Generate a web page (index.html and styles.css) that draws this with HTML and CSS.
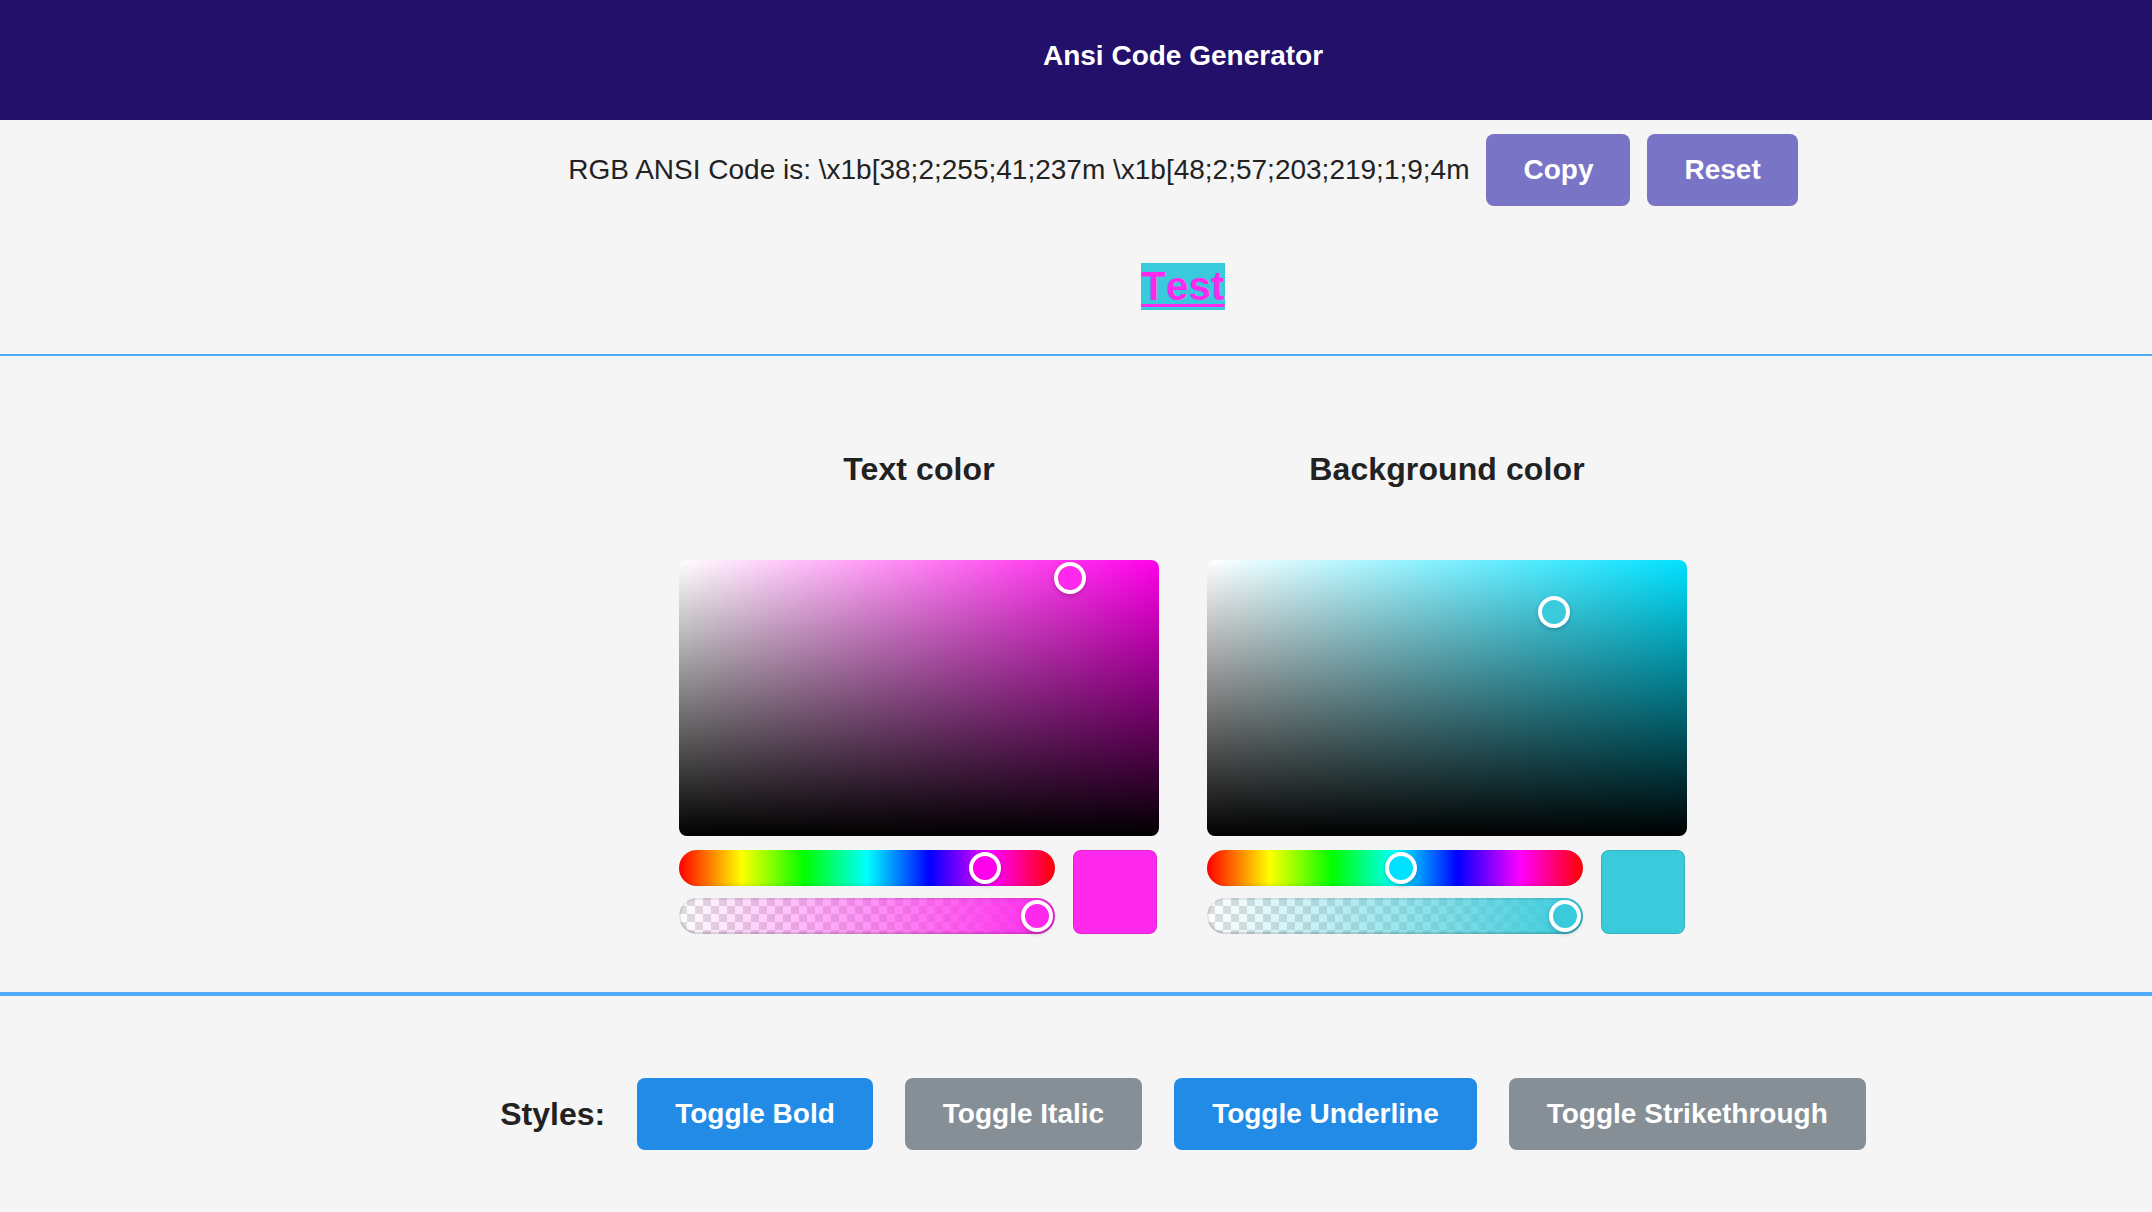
FILE: index.html
```html
<!DOCTYPE html>
<html lang="en">
<head>
<meta charset="utf-8">
<title>Ansi Code Generator</title>
<link rel="stylesheet" href="styles.css">
</head>
<body>
<header class="topbar">
  <h1 class="title">Ansi Code Generator</h1>
</header>

<section class="output">
  <div class="code-row">
    <span class="code-text">RGB ANSI Code is: \x1b[38;2;255;41;237m \x1b[48;2;57;203;219;1;9;4m</span>
    <button class="btn btn-violet">Copy</button>
    <button class="btn btn-violet">Reset</button>
  </div>
  <div class="preview-row">
    <span class="preview">Test</span>
  </div>
</section>

<hr class="rule-thin">

<section class="pickers">
  <div class="picker">
    <h2 class="picker-title">Text color</h2>
    <div class="sat sat-text">
      <span class="pointer pointer-big ptr-text-sat"></span>
    </div>
    <div class="controls">
      <div class="sliders">
        <div class="hue">
          <span class="pointer ptr-text-hue"></span>
        </div>
        <div class="alpha alpha-text">
          <span class="pointer ptr-text-alpha"></span>
        </div>
      </div>
      <div class="swatch swatch-text"></div>
    </div>
  </div>
  <div class="picker">
    <h2 class="picker-title">Background color</h2>
    <div class="sat sat-bg">
      <span class="pointer pointer-big ptr-bg-sat"></span>
    </div>
    <div class="controls">
      <div class="sliders">
        <div class="hue">
          <span class="pointer ptr-bg-hue"></span>
        </div>
        <div class="alpha alpha-bg">
          <span class="pointer ptr-bg-alpha"></span>
        </div>
      </div>
      <div class="swatch swatch-bg"></div>
    </div>
  </div>
</section>

<hr class="rule-thick">

<section class="styles-row">
  <span class="styles-label">Styles:</span>
  <button class="btn btn-blue">Toggle Bold</button>
  <button class="btn btn-gray">Toggle Italic</button>
  <button class="btn btn-blue">Toggle Underline</button>
  <button class="btn btn-gray">Toggle Strikethrough</button>
</section>
</body>
</html>
```

FILE: styles.css
```css
* { box-sizing: border-box; }

html, body {
  margin: 0;
  padding: 0;
  background: #f5f5f5;
  font-family: "Liberation Sans", Arial, sans-serif;
  color: #222;
}

.topbar {
  height: 120px;
  background: #23106a;
  display: flex;
  align-items: center;
  justify-content: center;
  padding-left: 214px;
  padding-bottom: 8px;
}

.title {
  margin: 0;
  font-size: 28px;
  font-weight: 700;
  color: #fff;
}

.output {
  padding-left: 214px;
  padding-top: 14px;
}

.code-row {
  display: flex;
  align-items: center;
  justify-content: center;
  gap: 17px;
}

.code-text {
  font-size: 28px;
  color: #222;
}

.btn {
  height: 72px;
  padding: 0 38px;
  border: none;
  border-radius: 8px;
  font-family: "Liberation Sans", Arial, sans-serif;
  font-size: 28px;
  font-weight: 700;
  color: #fff;
  cursor: pointer;
}

.btn-violet { background: #7a74c6; padding: 0 37px; }
.btn-blue { background: #228be6; }
.btn-gray { background: #868e96; }

.preview-row {
  display: flex;
  justify-content: center;
  margin-top: 57px;
}

.preview {
  display: inline-block;
  font-size: 40px;
  line-height: 47px;
  font-weight: 700;
  font-kerning: none;
  letter-spacing: 0.3px;
  background: #39cbdb;
  color: #ff29ed;
  text-decoration: underline;
  text-decoration-thickness: 3px;
  text-underline-offset: 4px;
}

.rule-thin {
  margin: 44px 0 0;
  border: none;
  height: 2px;
  background: #4dabf7;
}

.rule-thick {
  margin: 58px 0 0;
  border: none;
  height: 4px;
  background: #4dabf7;
}

.pickers {
  padding-left: 214px;
  display: flex;
  justify-content: center;
  gap: 48px;
  padding-top: 95px;
}

.picker {
  width: 480px;
  display: flex;
  flex-direction: column;
}

.picker-title {
  margin: 0;
  font-size: 32px;
  font-weight: 700;
  line-height: 37px;
  letter-spacing: 0.1px;
  text-align: center;
  color: #222;
}

.sat {
  position: relative;
  margin-top: 72px;
  height: 276px;
  border-radius: 8px;
}

.sat-text {
  background:
    linear-gradient(to top, #000, rgba(0,0,0,0)),
    linear-gradient(to right, #fff, hsl(305, 100%, 50%));
}

.sat-bg {
  background:
    linear-gradient(to top, #000, rgba(0,0,0,0)),
    linear-gradient(to right, #fff, hsl(187, 100%, 50%));
}

.controls {
  display: flex;
  gap: 18px;
  margin-top: 14px;
}

.sliders {
  width: 376px;
  display: flex;
  flex-direction: column;
  gap: 12px;
}

.hue, .alpha {
  position: relative;
  height: 36px;
  border-radius: 18px;
}

.hue {
  background: linear-gradient(to right, #f00 0%, #ff0 16.67%, #0f0 33.33%, #0ff 50%, #00f 66.67%, #f0f 83.33%, #f00 100%);
  box-shadow: inset 0 -2px 3px rgba(0,0,0,0.08);
}

.alpha {
  box-shadow: inset 0 0 0 2px rgba(0,0,0,0.06), inset 0 -1px 3px rgba(0,0,0,0.15);
}

.alpha-text {
  background:
    linear-gradient(to right, rgba(255,41,237,0), rgba(255,41,237,1)),
    conic-gradient(#ddd 25%, #fff 0 50%, #ddd 0 75%, #fff 0) 0 0 / 16px 16px;
}

.alpha-bg {
  background:
    linear-gradient(to right, rgba(57,203,219,0), rgba(57,203,219,1)),
    conic-gradient(#ddd 25%, #fff 0 50%, #ddd 0 75%, #fff 0) 0 0 / 16px 16px;
}

.swatch {
  width: 84px;
  height: 84px;
  border-radius: 8px;
  box-shadow: inset 0 0 0 1px rgba(0,0,0,0.12);
}

.swatch-text { background: #ff29ed; }
.swatch-bg { background: #39cbdb; }

.pointer {
  position: absolute;
  top: 50%;
  width: 32px;
  height: 32px;
  margin: -16px 0 0 -16px;
  border-radius: 50%;
  border: 4px solid #fff;
  box-shadow: 0 2px 4px rgba(0,0,0,0.2);
}

.pointer-big { top: 0; }

.ptr-text-sat { left: 391px; top: 18px; background: #ff29ed; }
.ptr-bg-sat { left: 347px; top: 52px; background: #39cbdb; }
.ptr-text-hue { left: 306px; background: hsl(305, 100%, 50%); }
.ptr-bg-hue { left: 194px; background: hsl(187, 100%, 50%); }
.ptr-text-alpha { left: 358px; background: #ff29ed; }
.ptr-bg-alpha { left: 358px; background: #39cbdb; }

.styles-row {
  padding-left: 214px;
  padding-top: 82px;
  display: flex;
  align-items: center;
  justify-content: center;
  gap: 32px;
}

.styles-label {
  font-size: 32px;
  font-weight: 700;
  color: #222;
}
```
